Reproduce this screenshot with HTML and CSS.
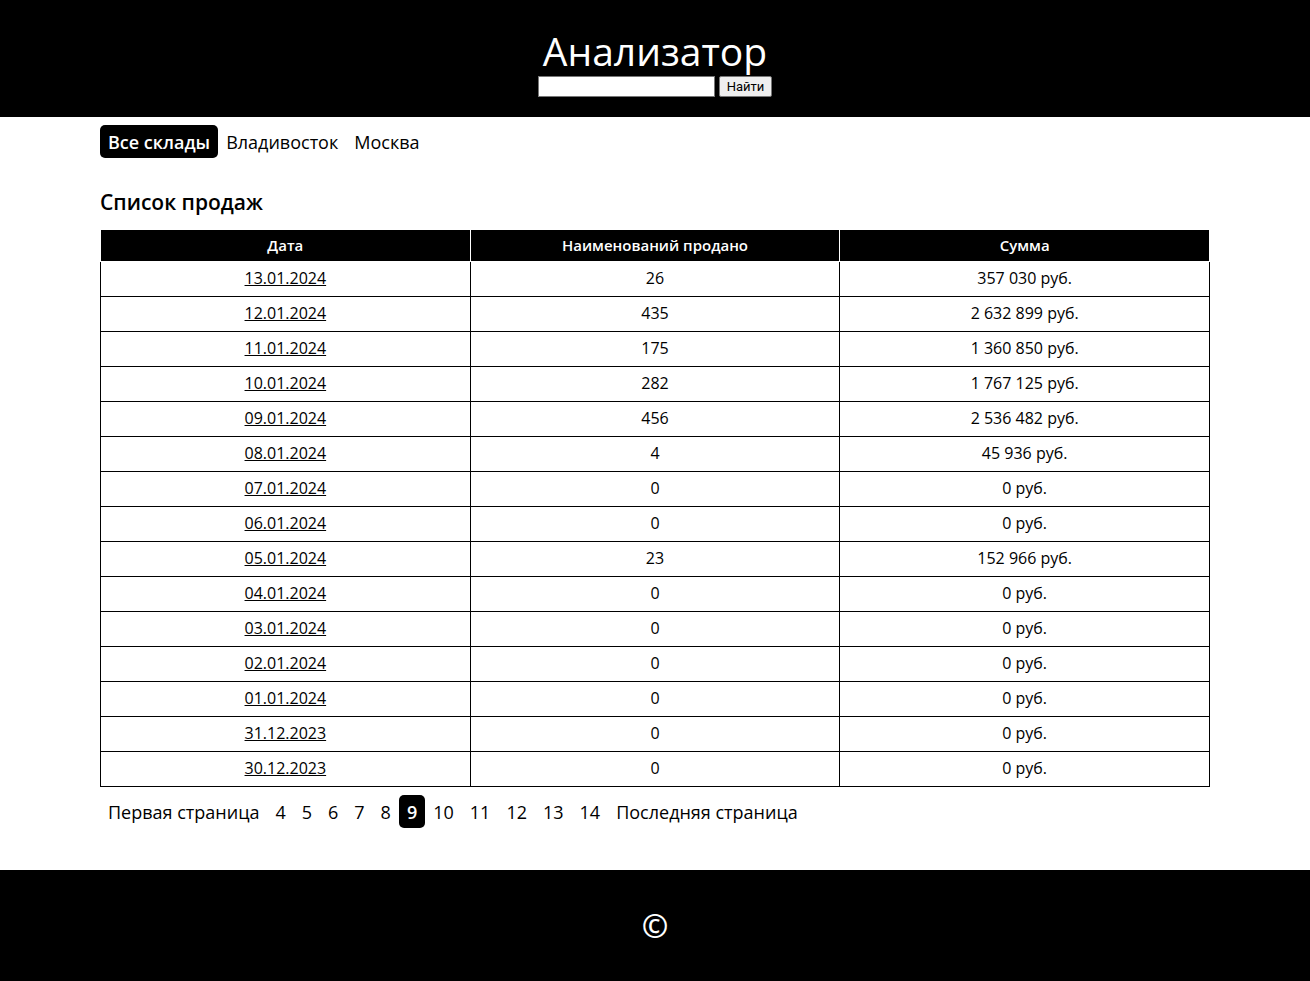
FILE: index.html
```html
<!DOCTYPE html>
<html lang="ru">
<head>
<meta charset="utf-8">
<title>Анализатор</title>
<link rel="stylesheet" href="styles.css">
</head>
<body>
<header class="header">
  <h1 class="title">Анализатор</h1>
  <form class="search">
    <input class="search-input" type="text" name="q" aria-label="Поиск">
    <button class="search-button" type="button">Найти</button>
  </form>
</header>
<main class="content">
  <nav class="links" aria-label="Склады">
    <a class="link active" href="#all">Все склады</a>
    <a class="link" href="#vl">Владивосток</a>
    <a class="link" href="#msk">Москва</a>
  </nav>
  <h2 class="subtitle">Список продаж</h2>
  <table class="sales">
    <thead>
      <tr><th>Дата</th><th>Наименований продано</th><th>Сумма</th></tr>
    </thead>
    <tbody>
      <tr><td><a href="#d">13.01.2024</a></td><td>26</td><td>357 030 руб.</td></tr>
      <tr><td><a href="#d">12.01.2024</a></td><td>435</td><td>2 632 899 руб.</td></tr>
      <tr><td><a href="#d">11.01.2024</a></td><td>175</td><td>1 360 850 руб.</td></tr>
      <tr><td><a href="#d">10.01.2024</a></td><td>282</td><td>1 767 125 руб.</td></tr>
      <tr><td><a href="#d">09.01.2024</a></td><td>456</td><td>2 536 482 руб.</td></tr>
      <tr><td><a href="#d">08.01.2024</a></td><td>4</td><td>45 936 руб.</td></tr>
      <tr><td><a href="#d">07.01.2024</a></td><td>0</td><td>0 руб.</td></tr>
      <tr><td><a href="#d">06.01.2024</a></td><td>0</td><td>0 руб.</td></tr>
      <tr><td><a href="#d">05.01.2024</a></td><td>23</td><td>152 966 руб.</td></tr>
      <tr><td><a href="#d">04.01.2024</a></td><td>0</td><td>0 руб.</td></tr>
      <tr><td><a href="#d">03.01.2024</a></td><td>0</td><td>0 руб.</td></tr>
      <tr><td><a href="#d">02.01.2024</a></td><td>0</td><td>0 руб.</td></tr>
      <tr><td><a href="#d">01.01.2024</a></td><td>0</td><td>0 руб.</td></tr>
      <tr><td><a href="#d">31.12.2023</a></td><td>0</td><td>0 руб.</td></tr>
      <tr><td><a href="#d">30.12.2023</a></td><td>0</td><td>0 руб.</td></tr>
    </tbody>
  </table>
  <nav class="links" aria-label="Страницы">
    <a class="link" href="#first">Первая страница</a>
    <a class="link" href="#p4">4</a>
    <a class="link" href="#p5">5</a>
    <a class="link" href="#p6">6</a>
    <a class="link" href="#p7">7</a>
    <a class="link" href="#p8">8</a>
    <a class="link active" href="#p9">9</a>
    <a class="link" href="#p10">10</a>
    <a class="link" href="#p11">11</a>
    <a class="link" href="#p12">12</a>
    <a class="link" href="#p13">13</a>
    <a class="link" href="#p14">14</a>
    <a class="link" href="#last">Последняя страница</a>
  </nav>
</main>
<footer class="footer">©</footer>
</body>
</html>
```
FILE: styles.css
```css
* {
  box-sizing: border-box;
}

body {
  display: flex;
  flex-direction: column;
  min-height: 100vh;
  margin: 0;
  background: #fff;
  color: #000;
  font-family: "Open Sans", sans-serif;
  font-size: 16px;
}

.header {
  display: flex;
  flex-direction: column;
  align-items: center;
  padding: 26px 16px 20px;
  background: #000;
  color: #fff;
}

.title {
  margin: 0;
  font-size: 39px;
  font-weight: 500;
  line-height: 50px;
}

.search {
  display: flex;
  gap: 4px;
}

.search-input {
  width: 177px;
  height: 21px;
  border: 1px solid #767676;
  background: #fff;
}

.search-button {
  height: 21px;
  padding: 0 7px;
  border: 1px solid #767676;
  border-radius: 2px;
  background: #efefef;
  color: #000;
  font-family: Roboto, sans-serif;
  font-size: 13px;
  line-height: 18px;
}

.content {
  flex: 1;
  padding: 8px 100px 42px;
}

.links {
  display: flex;
  flex-wrap: wrap;
}

.link {
  padding: 5px 8px 3px;
  border-radius: 5px;
  color: #000;
  font-size: 18px;
  line-height: 25px;
  text-decoration: none;
}

.link.active {
  background: #000;
  color: #fff;
  font-weight: 600;
}

.subtitle {
  margin: 28px 0 11px;
  font-size: 21px;
  font-weight: 600;
  line-height: 32px;
}

.sales {
  width: 100%;
  margin-bottom: 8px;
  border-collapse: collapse;
  table-layout: fixed;
  text-align: center;
}

.sales th {
  padding: 5px;
  border: 1px solid #fff;
  background: #000;
  color: #fff;
  font-size: 15px;
  font-weight: 600;
  line-height: 21px;
}

.sales td {
  padding: 5px 6px 7px;
  border: 1px solid #000;
  line-height: 22px;
}

.sales a {
  color: inherit;
}

.footer {
  padding: 32px 16px;
  background: #000;
  color: #fff;
  font-size: 32px;
  font-weight: 600;
  line-height: 47px;
  text-align: center;
}
```
